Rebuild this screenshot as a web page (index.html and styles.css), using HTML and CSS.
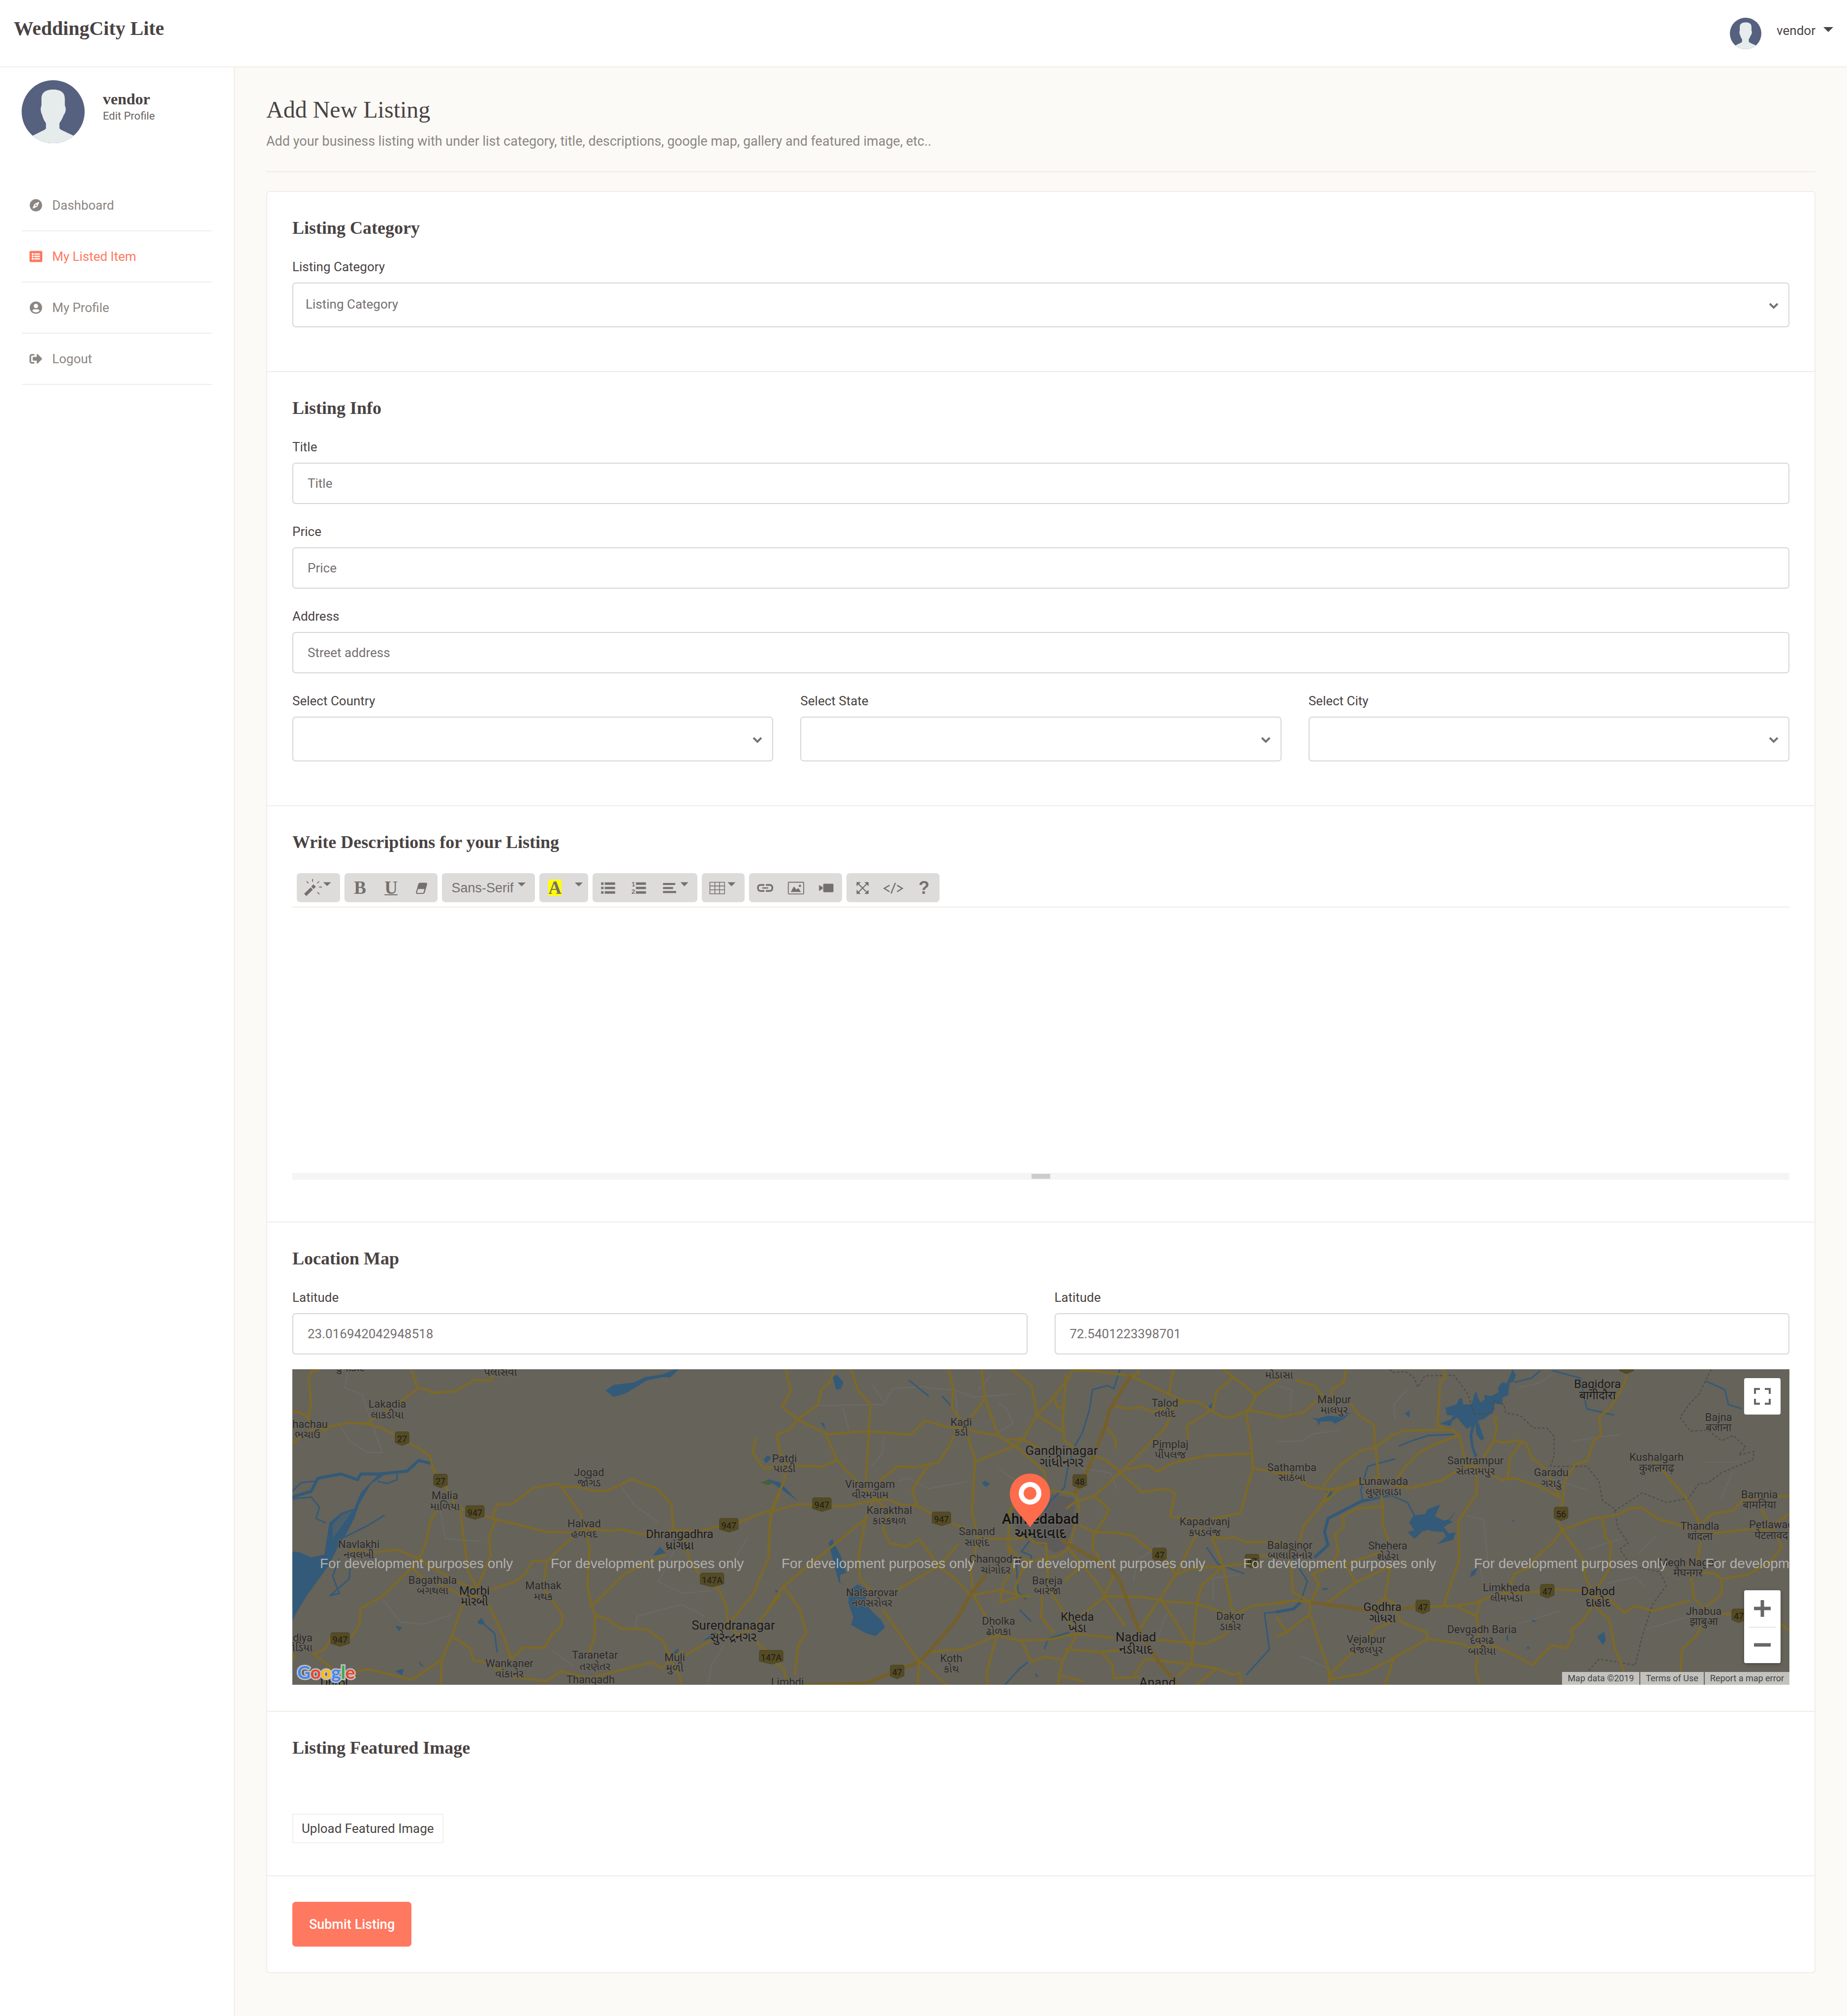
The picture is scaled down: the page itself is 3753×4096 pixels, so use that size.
FILE: index.html
```html
<!DOCTYPE html>
<html lang="en">
<head>
<meta charset="utf-8">
<title>Add New Listing - WeddingCity Lite</title>
<link rel="stylesheet" href="styles.css">
</head>
<body>
<svg class="defs" aria-hidden="true">
  <symbol id="avatar" viewBox="0 0 210 210">
    <rect width="210" height="210" fill="#56607f"/>
    <path fill="#e6ecec" d="M66 62C66 42 78 31 105 31s39 11 39 31v23c4 5 4 19-1 27l-3 4c-4 12-9 20-14 27v17c2 4 6 6 46 24l8 26H30l8-26c38-18 42-20 43-24v-17c-6-7-10-17-13-28-5-9-6-23-2-30z"/>
  </symbol>
  <symbol id="chevron" viewBox="0 0 20 14"><path d="M2 2l8 8 8-8" fill="none" stroke="#757273" stroke-width="4"/></symbol>
  <symbol id="caret" viewBox="0 0 18 9"><path d="M0 0h18l-9 9z" fill="currentColor"/></symbol>
  <symbol id="shield2" viewBox="0 0 30 30"><path d="M3 1h24l2 3v19l-14 6-14-6V4z" fill="#554b24" stroke="#47401f" stroke-width="1"/></symbol>
  <symbol id="shield3" viewBox="0 0 40 30"><path d="M3 1h34l2 3v19l-19 6-19-6V4z" fill="#554b24" stroke="#47401f" stroke-width="1"/></symbol>
  <symbol id="shield4" viewBox="0 0 50 30"><path d="M3 1h44l2 3v19l-24 6-24-6V4z" fill="#554b24" stroke="#47401f" stroke-width="1"/></symbol>
</svg>

<header class="topbar">
  <a class="brand" href="#">WeddingCity Lite</a>
  <button class="account" type="button">
    <svg class="account-avatar"><use href="#avatar"/></svg>
    <span>vendor</span>
    <svg class="account-caret"><use href="#caret"/></svg>
  </button>
</header>

<div class="shell">
  <aside class="sidebar">
    <div class="profile">
      <svg class="profile-avatar"><use href="#avatar"/></svg>
      <div class="profile-text">
        <strong class="profile-name">vendor</strong>
        <a class="profile-edit" href="#">Edit Profile</a>
      </div>
    </div>
    <nav class="menu">
      <a class="menu-item" href="#"><svg class="menu-icon" viewBox="0 0 496 512"><path d="M225.38 233.37c-12.5 12.5-12.5 32.76 0 45.25 12.49 12.5 32.76 12.5 45.25 0 12.5-12.5 12.5-32.76 0-45.25-12.5-12.49-32.76-12.49-45.25 0zM248 8C111.03 8 0 119.03 0 256s111.03 248 248 248 248-111.03 248-248S384.97 8 248 8zm126.14 148.05L308.17 300.4a31.938 31.938 0 0 1-15.77 15.77l-144.34 65.97c-16.65 7.61-33.81-9.55-26.2-26.2l65.98-144.35a31.938 31.938 0 0 1 15.77-15.77l144.34-65.97c16.65-7.6 33.8 9.55 26.19 26.2z"/></svg>Dashboard</a>
      <a class="menu-item active" href="#"><svg class="menu-icon" viewBox="0 0 512 512"><path d="M464 480H48c-26.51 0-48-21.49-48-48V80c0-26.51 21.49-48 48-48h416c26.51 0 48 21.49 48 48v352c0 26.51-21.49 48-48 48zM128 120c-22.091 0-40 17.909-40 40s17.909 40 40 40 40-17.909 40-40-17.909-40-40-40zm0 96c-22.091 0-40 17.909-40 40s17.909 40 40 40 40-17.909 40-40-17.909-40-40-40zm0 96c-22.091 0-40 17.909-40 40s17.909 40 40 40 40-17.909 40-40-17.909-40-40-40zm288-136v-32c0-6.627-5.373-12-12-12H204c-6.627 0-12 5.373-12 12v32c0 6.627 5.373 12 12 12h200c6.627 0 12-5.373 12-12zm0 96v-32c0-6.627-5.373-12-12-12H204c-6.627 0-12 5.373-12 12v32c0 6.627 5.373 12 12 12h200c6.627 0 12-5.373 12-12zm0 96v-32c0-6.627-5.373-12-12-12H204c-6.627 0-12 5.373-12 12v32c0 6.627 5.373 12 12 12h200c6.627 0 12-5.373 12-12z"/></svg>My Listed Item</a>
      <a class="menu-item" href="#"><svg class="menu-icon" viewBox="0 0 496 512"><path d="M248 8C111 8 0 119 0 256s111 248 248 248 248-111 248-248S385 8 248 8zm0 96c48.6 0 88 39.4 88 88s-39.4 88-88 88-88-39.4-88-88 39.4-88 88-88zm0 344c-58.7 0-111.3-26.6-146.5-68.2 18.8-35.4 55.6-59.8 98.5-59.8 2.4 0 4.8.4 7.1 1.1 13 4.2 26.6 6.9 40.9 6.9 14.3 0 28-2.7 40.9-6.9 2.3-.7 4.7-1.1 7.1-1.1 42.9 0 79.7 24.4 98.5 59.8C359.3 421.4 306.7 448 248 448z"/></svg>My Profile</a>
      <a class="menu-item" href="#"><svg class="menu-icon" viewBox="0 0 512 512"><path d="M497 273L329 441c-15 15-41 4.5-41-17v-96H152c-13.3 0-24-10.7-24-24v-96c0-13.3 10.7-24 24-24h136V88c0-21.4 25.9-32 41-17l168 168c9.3 9.4 9.3 24.6 0 34zM192 436v-40c0-6.6-5.4-12-12-12H96c-17.7 0-32-14.3-32-32V160c0-17.7 14.3-32 32-32h84c6.6 0 12-5.4 12-12V76c0-6.6-5.4-12-12-12H96c-53 0-96 43-96 96v192c0 53 43 96 96 96h84c6.6 0 12-5.4 12-12z"/></svg>Logout</a>
    </nav>
  </aside>

  <main class="main">
    <div class="page-head">
      <h1 class="page-title">Add New Listing</h1>
      <p class="page-sub">Add your business listing with under list category, title, descriptions, google map, gallery and featured image, etc..</p>
    </div>

    <form class="card">
      <section class="section">
        <h2 class="section-title">Listing Category</h2>
        <div class="fields">
          <div class="field">
            <label for="category">Listing Category</label>
            <div class="select"><select id="category"><option>Listing Category</option></select><svg><use href="#chevron"/></svg></div>
          </div>
        </div>
      </section>

      <section class="section">
        <h2 class="section-title">Listing Info</h2>
        <div class="fields">
          <div class="field"><label for="title">Title</label><input class="input" id="title" type="text" placeholder="Title"></div>
          <div class="field"><label for="price">Price</label><input class="input" id="price" type="text" placeholder="Price"></div>
          <div class="field"><label for="address">Address</label><input class="input" id="address" type="text" placeholder="Street address"></div>
          <div class="row">
            <div class="field"><label for="country">Select Country</label><div class="select"><select id="country"><option></option></select><svg><use href="#chevron"/></svg></div></div>
            <div class="field"><label for="state">Select State</label><div class="select"><select id="state"><option></option></select><svg><use href="#chevron"/></svg></div></div>
            <div class="field"><label for="city">Select City</label><div class="select"><select id="city"><option></option></select><svg><use href="#chevron"/></svg></div></div>
          </div>
        </div>
      </section>

      <section class="section">
        <h2 class="section-title">Write Descriptions for your Listing</h2>
        <div class="editor">
          <div class="toolbar">
            <div class="tools">
              <button type="button" class="tool tool-wide" aria-label="Style"><svg viewBox="54 48 288 192"><path d="M103 185l43-43 15 15-43 43zM150 137l15-15 16 16-15 15z"/><path d="M230 108h52l-26 25z"/><path d="M159 86v19M119 102l13 13M203 102l-13 13M202 140h19M191 174l14 14" class="line" stroke-width="6"/></svg></button>
            </div>
            <div class="tools">
              <button type="button" class="tool glyph">B</button>
              <button type="button" class="tool glyph underline">U</button>
              <button type="button" class="tool" aria-label="Remove font style"><svg viewBox="784 48 206 192"><path d="M875 111h36q12 0 10 11l-16 55q-3 9-13 9h-35q-12 0-10-11l15-54q3-10 13-10zm-14 42l-7 22q-1 4 4 4h33q5 0 6-4l6-22z" fill-rule="evenodd"/></svg></button>
            </div>
            <div class="tools">
              <button type="button" class="tool font-pick">Sans-Serif<svg class="tool-caret"><use href="#caret"/></svg></button>
            </div>
            <div class="tools tools-color">
              <button type="button" class="tool glyph"><span class="mark">A</span></button>
              <button type="button" class="tool color-more" aria-label="More color"><svg class="tool-caret"><use href="#caret"/></svg></button>
            </div>
            <div class="tools">
              <button type="button" class="tool" aria-label="Unordered list"><svg viewBox="492 48 206 192"><path d="M549 109h16v16h-16zM549 138h16v16h-16zM549 168h16v16h-16zM573 109h69v16h-69zM573 138h69v16h-69zM573 168h69v16h-69z"/></svg></button>
              <button type="button" class="tool" aria-label="Ordered list"><svg viewBox="698 48 206 192"><path d="M780 109h67v16h-67zM780 138h67v16h-67zM780 168h67v16h-67z"/><text x="751" y="137" class="ol-num">1</text><text x="751" y="184" class="ol-num">2</text></svg></button>
              <button type="button" class="tool tool-mid" aria-label="Paragraph"><svg viewBox="904 48 284 192"><path d="M960 113h81v13h-81zM960 140h67v13h-67zM960 166h87v14h-87zM1076 108h52l-26 27z"/></svg></button>
            </div>
            <div class="tools">
              <button type="button" class="tool tool-mid" aria-label="Table"><svg viewBox="1218 48 282 192"><path d="M1271 108h97v77h-97zM1271 133h97M1271 158h97M1304 108v77M1335 108v77" class="line" stroke-width="5"/><path d="M1388 108h52l-26 27z"/></svg></button>
            </div>
            <div class="tools">
              <button type="button" class="tool" aria-label="Link"><svg viewBox="60 48 206 192"><path d="M162 126h-25q-18 0-18 20t18 20h25M172 126h25q18 0 18 20t-18 20h-25" class="line" stroke-width="11"/><path d="M151 146h32" class="line" stroke-width="9" stroke-linecap="round"/></svg></button>
              <button type="button" class="tool" aria-label="Picture"><svg viewBox="266 48 206 192"><rect x="321" y="108" width="102" height="78" rx="4" class="line" stroke-width="6"/><path d="M337 173l19-33q3-3 6 0l13 17 9-8q3-2 6 1l15 23z"/><circle cx="398" cy="132" r="8"/></svg></button>
              <button type="button" class="tool" aria-label="Video"><svg viewBox="472 48 206 192"><rect x="553" y="118" width="68" height="56" rx="6"/><path d="M525 127l24 13v12l-24 14z"/></svg></button>
            </div>
            <div class="tools">
              <button type="button" class="tool" aria-label="Full screen"><svg viewBox="708 48 206 192"><path d="M775 107h28l-28 28zM855 107v28l-28-28zM775 186v-28l28 28zM855 186h-28l28-28z"/><path d="M783 115l64 63M847 115l-64 63" class="line" stroke-width="7"/></svg></button>
              <button type="button" class="tool" aria-label="Code view"><svg viewBox="914 48 206 192"><path d="M994 128l-35 21 35 22M1044 128l35 21-35 22M1033 112l-29 71" class="line" stroke-width="8"/></svg></button>
              <button type="button" class="tool help">?</button>
            </div>
          </div>
          <textarea class="editor-area" aria-label="Description"></textarea>
          <div class="editor-bar"><span class="editor-grip"></span></div>
        </div>
      </section>

      <section class="section">
        <h2 class="section-title">Location Map</h2>
        <div class="row row-map">
          <div class="field"><label for="lat">Latitude</label><input class="input" id="lat" type="text" value="23.016942042948518"></div>
          <div class="field"><label for="lng">Latitude</label><input class="input" id="lng" type="text" value="72.5401223398701"></div>
        </div>
        <div class="map">
          <svg class="map-canvas">
            <g transform="translate(-62.5 -234.3) scale(.672 .5844)">
              <path class="minor" d="M262 401L252 465 305 490 325 560 365 690 320 690 265 650 240 600M540 890L555 990 665 1000M1085 805L1125 870 1200 935M365 1200L420 1280 490 1287 570 1255M1270 980L1200 1140 1275 1180 1360 1170M1130 1300L1135 1260 1270 1218 1340 1260M1470 985L1430 1060M1400 1360L1360 1430 1350 1498M880 1380L940 1430"/>
              <path class="water" d="M1040 475L1065 455 1125 447 1160 428 1215 418 1245 403 1262 401 1235 430 1215 428 1165 440 1100 485 1065 497ZM355 765L300 830 280 885 240 900 205 935 190 1045 150 1055 115 1037 93 1035V1278L104 1250 135 1190 205 1080 230 1020 255 975 280 920 295 870 330 800 375 765ZM1183 1050L1205 1018 1222 1040ZM653 1280L665 1265 675 1283 660 1290ZM405 1293L425 1297 415 1312ZM1245 1385L1258 1372 1268 1390 1250 1397ZM1335 1345L1370 1315 1390 1325ZM1518 715L1530 700 1540 712 1525 727ZM405 1450L430 1442 425 1465ZM475 1415L493 1437 480 1430Z"/>
              <path class="island" d="M215 990L215 940 245 905 275 893 240 950Z"/>
              <path class="river" d="M520 730L475 718 440 755 355 765 300 765 290 785 240 765 170 780 150 825 93 845"/>
              <path class="stream" d="M93 852L150 845 175 880 165 920 195 935M250 985L320 945 372 908M235 1060L215 1120 235 1180 205 1188M270 1060L265 1130 210 1185M93 825L120 795 165 790M350 790L380 798 410 785 410 765M665 1280L705 1320 712 1385"/>
              <path class="green" d="M1510 795L1530 785 1552 795 1530 804Z"/>
              <path class="road" d="M175 403L150 410 143 430 149 515 142 572M93 548L112 549 142 570 150 610 115 640 93 660M150 610L195 612 205 600 265 587 315 590 360 603 405 630M315 590L360 560 420 515 472 467 453 401M472 467L500 470 515 483 585 478 645 437 690 442 700 425 712 401M445 655L508 700 520 750 560 815 585 870 600 885 675 910 700 920 865 967 940 968 990 955 1055 964 1083 957 1145 973 1200 975 1245 960M1245 960L1240 872 1195 815 1120 783 1048 822 1010 825 960 810 905 808 895 798 820 815 757 870 712 870 698 920 708 930 688 980 693 1050 652 1160M600 890L625 1105 652 1160M905 808L965 905 978 955M1245 960L1270 960 1320 965 1370 950 1400 945M1440 935L1515 900 1568 887M1270 960L1295 1065 1320 1110 1360 1120 1405 1220 1410 1290M1220 1045L1100 1110 998 1225 985 1155 992 1020 978 960M940 985L905 1020 863 1068 820 1067 795 1115 765 1140 690 1168M863 1068L852 1160 910 1255 905 1295 880 1320 855 1368 790 1368 755 1410M998 1225L1008 1255 1007 1330 990 1390M1008 1255L1050 1272 1085 1302 1165 1305 1215 1345 1240 1420 1265 1470 1270 1498M1280 1395L1350 1350 1410 1290 1485 1185 1535 1050 1535 950 1545 890 1568 830M1440 1330L1490 1340 1520 1375 1568 1400M1410 1290L1440 1325 1490 1300 1568 1185M1495 640L1485 690 1520 748 1568 735M1568 622L1558 630 1568 690M535 885L510 930 500 990 485 1040 475 1060 410 1028 340 1038 265 1030M475 1060L510 1085 590 1140 650 1165M475 1060L455 1090 415 1135 365 1190 300 1232 295 1290 270 1335M455 1090L480 1120 560 1160 600 1185 650 1190 690 1225 735 1340 755 1410M210 1335L190 1375 155 1390 185 1415 240 1465 320 1443 455 1480 545 1410 575 1330 605 1225 640 1190M575 1330L630 1370 640 1412 690 1425 755 1470 860 1485 905 1450 990 1475 1180 1420 1210 1440 1270 1380M545 1410L542 1498M93 1415L100 1390"/>
            </g>
            <g transform="translate(963.9 -14.7) scale(.672 .4324)">
              <path class="city" d="M750 640L860 620 930 640 930 760 900 880 870 895 830 860 780 830 750 760Z"/>
              <path class="minor" d="M150 205L355 200 380 125 470 115 500 125 565 130 625 165 750 150M320 110L355 190M230 210L250 330M355 350L350 430 310 500M570 150L580 270M700 190L725 220 745 290 700 330M400 560L425 545 490 595 610 560M680 60L640 130M1430 1000L1350 1015 1350 1120M1110 1030L1120 930 1190 860M1210 1180L1180 1300M640 880L680 950M700 500L790 600M950 500L1040 520 1060 600"/>
              <path class="water" d="M200 70L212 60 232 95 225 125 210 130ZM250 1070L275 1045 300 1065 300 1140 330 1190 345 1210 358 1247 330 1287 300 1275 255 1235 262 1200 247 1130ZM187 850L198 832 225 915 240 990 222 1000 222 1040 250 1055 240 1050 218 1035ZM650 568L660 558 675 572 663 588ZM0 440L12 445 0 475ZM0 550L40 565 95 655 55 610ZM162 285L172 285 178 318ZM1332 215L1348 190 1345 220ZM25 1070L35 1075 28 1085Z"/>
              <path class="stream" d="M1068 34L1050 125 1030 110 985 130 975 230 955 330 930 400 910 500 900 590 860 650 840 700M795 840L770 890 800 910 800 940M755 950L760 1080 785 1115M765 1165L800 1220M915 1270L850 1300 840 1350M790 1410L765 1440 720 1517M1568 1170L1505 1180 1520 1350 1450 1470M430 85L490 160M530 160L560 210M820 1480L812 1465M1330 870L1365 950 1445 995"/>
              <path class="road" d="M58 34L73 135 47 210 93 270M205 34L190 95 165 130 155 200 93 270 68 320 32 338 37 410 60 485 52 560 13 700 5 900M93 270L178 335M255 34L275 130 313 200 300 560M178 340L308 325 435 342 478 275 545 305 600 310M178 340L213 460 237 505 325 640M0 495L60 485 168 492 213 460M0 705L100 668 237 678 325 650 370 645 400 670 455 675 500 715M555 755L600 780 645 830 730 832 790 825 815 850 845 852 850 1000 845 1050M325 640L300 730 278 910 282 1020 320 1080M325 640L370 700 352 785 372 852 420 867 463 833 520 960M300 735L50 1055 0 1170M50 1055L100 1160 120 1275 95 1330 85 1470M340 560L395 490 445 495 520 470 550 400 575 320 600 300 660 170 650 34M455 675L440 600 490 480M550 34L565 130 560 210 600 310 630 460 625 600 620 700 638 820M638 835L617 985 625 1090 615 1095M600 310L640 330 700 345 765 410 840 515 845 600 870 605 935 622 945 690 915 870 885 910 810 935 760 920 730 860 735 700 755 640M660 170L700 345M740 34L800 110 810 180 817 250 900 330M910 80L860 180 817 250 775 360 755 390 632 468M905 60L895 280 900 370 945 420M910 80L925 40 980 40 1100 65 1123 55 1123 34M1100 65L1215 150 1265 185 1300 185 1380 260 1410 258 1455 225 1568 260M1230 34L1215 160M1050 205L1095 220 1130 210 1165 235 1265 185M1240 180L1205 310 1080 505 990 630 930 660 905 690M1025 300L1055 360 1055 410M870 170L880 215 897 215M725 365L775 362 830 410M990 440L1030 465 1070 520 1135 612 1205 595 1235 615 1220 725 1240 730 1325 745 1432 710 1470 500 1465 380 1450 250 1480 155 1410 70 1380 34M1480 155L1568 60M1410 70L1360 140 1350 220 1270 300 1275 360M1085 505L1155 485 1182 515 1225 475 1330 440 1468 430M1470 500L1568 525M1315 775L1285 850 1237 1000 1125 1260M1345 815L1380 960 1410 1180M1350 820L1380 830 1412 822 1445 845 1568 848M945 765L990 800 1045 800 1105 815 1165 890M990 800L985 880 1005 915 1000 930M990 630L1035 690 1020 740 992 800M1205 930L1237 1000 1280 970 1380 960 1450 945M1490 910L1568 915M1380 960L1315 1050 1300 1140 1283 1420 1240 1480M900 1030L945 965M915 880L990 1020 1025 1100 1140 1105 1210 1125 1300 1135 1410 1190 1470 1145 1568 1130M1025 1100L930 1215M860 1080L920 1230 945 1280 1050 1295M940 1275L895 1400 880 1517M940 1275L870 1300 840 1305 770 1310 695 1285 595 1350 490 1362M870 1275L830 1200 833 1090 850 1040M695 1285L665 1460 668 1517M695 1285L625 1095 705 1070 770 1100 800 1100M705 1130L760 1105 750 1060 775 970 800 935M705 1130L715 1040 735 1000M1410 1190L1390 1280 1325 1325 1180 1305M900 1350L1010 1362 1090 1350M1010 1362L1045 1420 1050 1485 1130 1480M770 1310L800 1410 840 1385 890 1400M880 1470L960 1500M1145 1395L1283 1420 1360 1440 1410 1470 1430 1460 1435 1517M1360 1440L1300 1517M730 860L750 1000M1050 1000L1020 1100 1085 1240M1190 1110L1240 1230 1283 1340M1145 1395L1110 1470M0 1380L50 1440 60 1490"/>
              <path class="highway" d="M1100 65L1035 230 1025 300 990 430 965 530 930 620M890 835L1040 970 1065 1020 1125 1260 1190 1420 1245 1517M663 1000L615 1095 575 1210 490 1362 465 1405 300 1510 100 1517"/>
              <path class="road" d="M465 1405L545 1517M350 1160L385 1240 460 1405 457 1517M395 1070L520 960 580 855M520 960L570 1020 615 1095"/>
            </g>
            <g transform="translate(1999.3 -14.7) scale(.7013 .4324)">
              <path class="minor" d="M0 110L45 130 40 230M380 130L340 200 345 270M700 120L760 100 800 60M860 370L1000 340M0 375L80 370 100 340 180 320M550 720L600 740 615 960M780 540L900 600M1320 520L1290 640M1240 470L1340 470M960 1040L1040 1010 1070 1060M1060 1260L1210 1190M70 1380L150 1440M700 1230L820 1170M590 960L600 1040M900 880L1000 830M1100 820L1050 900"/>
              <path class="water" d="M487 192L492 215 510 205 522 200 530 172 538 170 542 200 566 198 572 165 578 135 584 165 592 190 605 175 602 155 622 160 645 142 642 120 655 95 668 100 685 34 694 60 688 92 676 98 672 155 655 168 655 200 632 195 632 225 620 245 600 270 584 275 602 360 594 370 580 340 576 290 568 345 572 400 582 440 576 450 565 400 560 345 565 300 552 315 525 262 505 280 512 250 495 250ZM474 290L512 265 505 300ZM398 720L430 715 440 690 475 670 460 725 485 745 500 740 522 697 502 745 512 750 485 775 500 805 520 800 512 835 465 857 492 820 485 798 450 795 440 788 425 795 400 830 380 798 400 790 385 755ZM103 262L120 265 150 252 190 258 218 235 195 268 170 290 160 278 128 280 123 298 118 275Z"/>
              <path class="water" d="M372 240L388 228 385 262ZM145 605L163 608 158 635 143 635ZM930 1290L950 1268 955 1310 945 1328ZM565 985L585 965 575 1000 562 1010ZM665 1300L672 1275 672 1315ZM683 740L690 745 686 755ZM738 1210L752 1215 748 1225ZM723 1345L730 1335 736 1347ZM133 1064L150 1062 148 1070 133 1072Z"/>
              <path class="stream" d="M515 340L440 345 385 375 355 395M345 455L265 490 245 600 250 650M400 720L380 660 330 625M40 900L90 1030 70 1130M690 95L740 75 765 40M800 40L880 75 900 220 980 250M1245 90L1300 130 1310 200 1350 220"/>
              <path class="river" d="M330 625L245 655 150 735 140 800 150 860 110 920M70 1130L50 1160 0 1175"/>
              <path class="border" d="M330 34L335 50 375 45 400 75 410 118 430 65 515 62 555 150 575 245 625 240 630 180 660 200 665 240 705 250 745 310 785 310 805 350 805 440 795 490 900 490 935 560 945 650 980 690 990 780 1020 850 995 880 1030 960 1110 985 1130 1050 1090 1140 1060 1290 1040 1425 935 1395 900 1460M1260 34L1225 150 1195 200 1170 260 1200 325 1250 320 1290 370 1325 345 1360 400 1340 437 1385 420 1380 460 1290 520 1250 570 1225 570 1195 640 1130 660 1060 615 980 700"/>
              <path class="road" d="M203 34L195 95 160 130 165 200M55 85L110 110 138 165 115 185 80 235 5 262M215 195L240 250 283 295 288 400 298 560 310 690 307 760 325 840M480 34L492 70 475 90 467 300 515 325 530 345 550 480M0 520L40 520 95 585 155 600 215 580 300 540M135 590L145 560 185 485 240 420 288 400 330 350 370 322 515 318M530 345L460 385 410 430 375 490 335 580 390 592 480 555 545 490 580 490M240 555L180 600 125 680 80 770 65 860 40 890 48 1080 100 1130M155 600L140 640 125 680M310 685L285 680 230 690 190 730 198 770 170 810 180 890 160 960 105 995 125 1045 100 1130M580 490L655 555 690 545 770 590 825 640M580 490L580 620 527 750 530 930 490 1120 485 1145M600 450L630 370 640 300 632 280 640 250M630 370L660 378 700 368 725 385 740 450 780 500 820 630M710 375L677 450 670 548M1015 60L1010 100 970 210 935 260 942 340 920 370 900 465 865 480 835 560 830 660 822 690M815 745L828 790 890 930 895 1010 925 1100M828 790L800 850 745 930 740 960 690 995 675 1060 660 1085M828 790L920 735 985 720 1020 690 1055 682 1110 740 1220 790M945 735L955 830 970 850 965 970 935 1050 925 1100M1095 465L1135 540 1185 630 1220 735 1230 800 1280 803 1370 785 1430 790M1225 770L1260 715 1325 697 1350 650 1400 635 1487 630M1235 800L1220 930 1190 960M1405 690L1425 750 1440 780 1465 870 1430 940 1365 1000 1290 1020 1270 992 1200 985 1210 1110 1260 1180 1320 1185M1290 1020L1290 1090 1245 1150M1440 760L1487 715M0 1130L60 1120 100 1130M445 1150L520 1145 580 1130 640 1090 765 1078M805 1068L880 1075 925 1105 960 1110 1010 1178 1040 1145 1090 1170 1200 1120M315 1110L265 1168M315 1110L365 1155M145 1135L230 1035 330 960 315 1110M230 1035L200 950 310 890M335 1220L290 1250 250 1320 160 1460 150 1517M350 1180L360 1220 435 1270 440 1300 540 1325 565 1345 620 1325 700 1385 740 1425 800 1330 840 1345 860 1290 855 1260 890 1210 915 1150M440 1300L390 1345 330 1400 250 1465 155 1490M340 1395L315 1517M525 1150L580 1195 590 1300 578 1450 590 1510M590 1130L580 1190M925 1150L965 1210 980 1340 1005 1440 1005 1517M100 1190L120 1300 150 1430 155 1490M100 1130L95 1190 60 1230 30 1270 0 1290M0 1200L30 1270M1245 1210L1215 1290 1175 1350 1170 1517M1460 1230L1487 1260"/>
              <path class="highway" d="M100 1130L145 1138 265 1168 365 1160 405 1150"/>
            </g>

            <g>
              <use href="#shield2" x="208" y="126" width="30" height="30"/><use href="#shield2" x="286" y="212" width="30" height="30"/>
              <use href="#shield3" x="351" y="276" width="40" height="30"/><use href="#shield3" x="867" y="302" width="40" height="30"/>
              <use href="#shield3" x="77" y="534" width="40" height="30"/><use href="#shield4" x="828" y="413" width="50" height="30"/>
              <use href="#shield4" x="948" y="570" width="50" height="30"/><use href="#shield3" x="1056" y="260" width="40" height="30"/>
              <use href="#shield3" x="1299" y="289" width="40" height="30"/><use href="#shield2" x="1585" y="213" width="30" height="30"/>
              <use href="#shield2" x="1747" y="362" width="30" height="30"/><use href="#shield2" x="1935" y="375" width="30" height="30"/>
              <use href="#shield2" x="1214" y="600" width="30" height="30"/><use href="#shield2" x="2563" y="279" width="30" height="30"/>
              <use href="#shield2" x="2535" y="436" width="30" height="30"/><use href="#shield2" x="2282" y="468" width="30" height="30"/>
              <use href="#shield2" x="2924" y="486" width="30" height="30"/><use href="#shield2" x="2696" y="-20" width="30" height="30"/>
            </g>
            <g class="shield-text">
              <text x="223" y="148">27</text><text x="301" y="234">27</text><text x="371" y="298">947</text><text x="887" y="324">947</text><text x="97" y="556">947</text><text x="853" y="435">147A</text><text x="973" y="592">147A</text><text x="1076" y="282">947</text><text x="1319" y="311">947</text><text x="1600" y="235">48</text><text x="1762" y="384">47</text><text x="1950" y="397">47</text><text x="1229" y="622">47</text><text x="2578" y="301">56</text><text x="2550" y="458">47</text><text x="2297" y="490">47</text><text x="2939" y="508">47</text>
            </g>
            <g class="town">
              <text x="118" y="4">કુવાકાટ</text><text x="423" y="13">પલાસવા</text>
              <text x="193" y="78">Lakadia</text><text x="193" y="100">લાકડીયા</text>
              <text x="72" y="119" class="to-end">Bhachau</text><text x="31" y="140">ભચાઉ</text>
              <text x="310" y="264">Malia</text><text x="310" y="286">માળિયા</text>
              <text x="603" y="217">Jogad</text><text x="603" y="238">જોગડ</text>
              <text x="593" y="321">Halvad</text><text x="593" y="342">હળવદ</text>
              <text x="135" y="363">Navlakhi</text><text x="135" y="384">નવલખી</text>
              <text x="285" y="436">Bagathala</text><text x="285" y="457">બગથલા</text>
              <text x="510" y="447">Mathak</text><text x="510" y="469">મથક</text>
              <text x="41" y="553" class="to-end">Jodiya</text><text x="41" y="573" class="to-end">જોડિયા</text>
              <text x="615" y="588">Taranetar</text><text x="615" y="611">તરણેતર</text>
              <text x="777" y="593">Muli</text><text x="777" y="614">મુળી</text>
              <text x="441" y="605">Wankaner</text><text x="441" y="626">વાંકાનેર</text>
              <text x="606" y="638">Thangadh</text>
              <text x="1359" y="115">Kadi</text><text x="1359" y="135">કડી</text>
              <text x="1000" y="189">Patdi</text><text x="1000" y="209">પાટડી</text>
              <text x="1773" y="76">Talod</text><text x="1773" y="97">તલોદ</text>
              <text x="1784" y="160">Pimplaj</text><text x="1784" y="181">પીંપલજ</text>
              <text x="1174" y="241">Viramgam</text><text x="1174" y="262">વીરમગામ</text>
              <text x="1213" y="294">Karakthal</text><text x="1213" y="315">કારકથળ</text>
              <text x="1391" y="337">Sanand</text><text x="1391" y="359">સાણંદ</text>
              <text x="1429" y="393">Changodar</text><text x="1429" y="415">ચાંગોદર</text>
              <text x="1854" y="317">Kapadvanj</text><text x="1854" y="339">કપડવંજ</text>
              <text x="2027" y="365">Balasinor</text><text x="2027" y="385">બાલાસિનોર</text>
              <text x="2031" y="207">Sathamba</text><text x="2031" y="227">સાઠંબા</text>
              <text x="1534" y="437">Bareja</text><text x="1534" y="457">બારેજા</text>
              <text x="1178" y="461">Nalsarovar</text><text x="1178" y="482">નળસરોવર</text>
              <text x="1435" y="519">Dholka</text><text x="1435" y="540">ઢોળકા</text>
              <text x="1906" y="509">Dakor</text><text x="1906" y="530">ડાકોર</text>
              <text x="1339" y="595">Koth</text><text x="1339" y="616">કોથ</text>
              <text x="1006" y="643">Limbdi</text><text x="2005" y="19">મોડાસા</text>
              <text x="2117" y="69">Malpur</text><text x="2117" y="90">માલપુર</text>
              <text x="2898" y="105">Bajna</text><text x="2898" y="126">बजाना</text>
              <text x="2772" y="186">Kushalgarh</text><text x="2772" y="208">कुशलगढ़</text>
              <text x="2404" y="193">Santrampur</text><text x="2404" y="214">સંતરામપુર</text>
              <text x="2558" y="217">Garadu</text><text x="2558" y="239">ગરાડુ</text>
              <text x="2217" y="235">Lunawada</text><text x="2217" y="256">લુણાવાડા</text>
              <text x="2981" y="262">Bamnia</text><text x="2981" y="283">बामनिया</text>
              <text x="2860" y="326">Thandla</text><text x="2860" y="347">थांदला</text>
              <text x="2960" y="323" class="to-start">Petlawad</text><text x="2971" y="345" class="to-start">पेटलावद</text>
              <text x="2226" y="366">Shehera</text><text x="2226" y="388">શેહેરા</text>
              <text x="2836" y="400">Megh Nagar</text><text x="2836" y="421">मेघनगर</text>
              <text x="2467" y="451">Limkheda</text><text x="2467" y="472">લીમખેડા</text>
              <text x="2868" y="499">Jhabua</text><text x="2868" y="520">झाबुआ</text>
              <text x="2417" y="536">Devgadh Baria</text><text x="2417" y="558">દેવગઢ</text><text x="2417" y="580">બારીયા</text>
              <text x="2182" y="556">Vejalpur</text><text x="2182" y="577">વેજલપુર</text>
            </g>
            <g class="town town-md">
              <text x="787" y="343">Dhrangadhra</text><text x="787" y="366">ધ્રાંગધ્રા</text>
              <text x="370" y="458">Morbi</text><text x="370" y="480">મોરબી</text>
              <text x="85" y="645">Dhrol</text>
              <text x="1595" y="511">Kheda</text><text x="1595" y="534">ખેડા</text>
              <text x="2652" y="38">Bagidora</text><text x="2652" y="61">बागीदौरा</text>
              <text x="2653" y="459">Dahod</text><text x="2653" y="482">દાહોદ</text>
              <text x="2215" y="491">Godhra</text><text x="2215" y="514">ગોધરા</text>
            </g>
            <g class="town town-lg">
              <text x="896" y="529">Surendranagar</text><text x="896" y="553">સુરેન્દ્રનગર</text>
              <text x="1563" y="174">Gandhinagar</text><text x="1563" y="198">ગાંધીનગર</text>
              <text x="1714" y="553">Nadiad</text><text x="1714" y="578">નડીયાદ</text>
              <text x="1758" y="645">Anand</text>
            </g>
            <g class="town town-xl"><text x="1520" y="314">Ahmedabad</text><text x="1520" y="343">અમદાવાદ</text></g>
            <g class="devtext">
              <text x="56" y="404">For development purposes only</text><text x="525" y="404">For development purposes only</text><text x="994" y="404">For development purposes only</text><text x="1463" y="404">For development purposes only</text><text x="1932" y="404">For development purposes only</text><text x="2401" y="404">For development purposes only</text><text x="2871" y="404">For development purposes only</text>
            </g>
            <path fill="#ff6c4c" d="M1499 212C1476 212 1458 230 1458 253C1458 280 1482 297 1499 321C1516 297 1540 280 1540 253C1540 230 1522 212 1499 212Z"/>
            <circle cx="1499" cy="252" r="18" fill="none" stroke="#fff" stroke-width="10"/>
            <text class="google" x="10" y="629"><tspan fill="#4285f4">G</tspan><tspan fill="#ea4335">o</tspan><tspan fill="#fbbc05">o</tspan><tspan fill="#4285f4">g</tspan><tspan fill="#34a853">l</tspan><tspan fill="#ea4335">e</tspan></text>
          </svg>
          <div class="map-controls">
            <button type="button" class="map-btn" aria-label="Toggle fullscreen"><svg viewBox="0 0 34 34"><path d="M2 12V2h10M22 2h10v10M32 22v10H22M12 32H2V22" fill="none" stroke="#666" stroke-width="4"/></svg></button>
            <div class="map-zoom">
              <button type="button" class="map-btn" aria-label="Zoom in"><svg viewBox="0 0 34 34"><path d="M0 17h34M17 0v34" stroke="#666" stroke-width="7"/></svg></button>
              <button type="button" class="map-btn" aria-label="Zoom out"><svg viewBox="0 0 34 34"><path d="M0 17h34" stroke="#666" stroke-width="7"/></svg></button>
            </div>
          </div>
          <div class="map-legal"><span>Map data ©2019</span><a href="#">Terms of Use</a><a href="#">Report a map error</a></div>
        </div>
      </section>

      <section class="section section-upload">
        <h2 class="section-title">Listing Featured Image</h2>
        <button type="button" class="upload">Upload Featured Image</button>
      </section>

      <div class="section section-submit">
        <button type="submit" class="submit">Submit Listing</button>
      </div>
    </form>
  </main>
</div>
</body>
</html>
```
FILE: styles.css
```css
:root {
  --ink: #494343;
  --muted: #8b8682;
  --line: #f2ede5;
  --field: #d9d5d7;
  --coral: #ff7860;
  --serif: "Liberation Serif", serif;
  --sans: Roboto, sans-serif;
}
* { box-sizing: border-box; }
body {
  margin: 0;
  background: #fff;
  color: var(--ink);
  font: 26px/32px var(--sans);
}
a { color: inherit; text-decoration: none; }
button, input, select, textarea { font: inherit; color: inherit; margin: 0; }
button { border: 0; padding: 0; background: none; cursor: pointer; }
h1, h2, p { margin: 0; }
svg { display: block; }
.defs { display: none; }

/* Header */
.topbar {
  display: flex;
  justify-content: space-between;
  align-items: flex-start;
  height: 137px;
  padding: 36px 28px 0;
  border-bottom: 2px solid var(--line);
}
.brand { font: bold 40px/44px var(--serif); }
.account { display: flex; align-items: flex-start; }
.account span { margin: 10px 16px 0 31px; }
.account-avatar { width: 64px; height: 64px; border-radius: 50%; }
.account-caret { width: 20px; height: 10px; margin-top: 19px; }

.shell { display: grid; grid-template-columns: 477px 1fr; }

/* Sidebar */
.sidebar { border-right: 2px solid var(--line); padding: 26px 44px 0; }
.profile { display: flex; gap: 37px; align-items: flex-start; margin-bottom: 75px; }
.profile-avatar { width: 128px; height: 128px; border-radius: 50%; }
.profile-text { display: flex; flex-direction: column; gap: 4px; padding-top: 20px; }
.profile-name { font: bold 32px/36px var(--serif); }
.profile-edit { font-size: 22px; line-height: 26px; color: #6a6564; }
.menu-item {
  display: flex;
  align-items: center;
  gap: 20px;
  height: 104px;
  padding-left: 16px;
  border-bottom: 2px solid var(--line);
  color: var(--muted);
}
.menu-item.active { color: var(--coral); }
.menu-icon { width: 26px; height: 26px; fill: currentColor; }

/* Page */
.main { background: #fbfaf6; padding: 58px 64px 87px; }
.page-head { border-bottom: 2px solid var(--line); padding-bottom: 45px; margin-bottom: 38px; }
.page-title { font: 48px/56px var(--serif); margin-bottom: 20px; }
.page-sub { font-size: 27px; color: var(--muted); }

.card { background: #fff; border: 2px solid var(--line); border-radius: 7px; }
.section { padding: 53px 51px; border-bottom: 2px solid var(--line); }
.section:last-child { border-bottom: 0; }
.section-title { font: bold 36px/40px var(--serif); margin-bottom: 43px; }

.fields { display: grid; gap: 40px; margin-bottom: 36px; }
.row { display: grid; grid-auto-flow: column; grid-auto-columns: 1fr; gap: 55px; }
.row-map { margin-bottom: 30px; }
.field { display: flex; flex-direction: column; gap: 16px; }
.input {
  width: 100%;
  height: 84px;
  padding: 0 29px;
  border: 2px solid var(--field);
  border-radius: 7px;
  background: #fff;
  color: #747070;
}
.input::placeholder { color: #747070; opacity: 1; }
.select { display: grid; align-items: center; }
.select > * { grid-area: 1 / 1; }
.select select {
  width: 100%;
  height: 91px;
  padding: 0 25px 3px;
  border: 2px solid var(--field);
  border-radius: 7px;
  background: #fff;
  color: #747070;
  appearance: none;
}
.select svg { justify-self: end; width: 20px; height: 14px; margin: 4px 22px 0 0; pointer-events: none; }

/* Editor */
.editor { margin-bottom: 32px; }
.toolbar { display: flex; flex-wrap: wrap; gap: 9px; padding: 0 9px 9px; border-bottom: 2px solid var(--line); }
.tools { display: flex; border-radius: 7px; background: #dddcda; color: #74706d; }
.tool { display: flex; align-items: center; justify-content: center; width: 63px; height: 59px; }
.tool > svg { width: 100%; height: 100%; fill: currentColor; }
.tool .line { fill: none; stroke: currentColor; }
.tool-wide { width: 88px; }
.tool-mid { width: 87px; }
.glyph { font: bold 37px/33px var(--serif); }
.underline { text-decoration: underline; text-decoration-thickness: 2px; }
.font-pick { width: 189px; gap: 8px; font: 27px/32px "Liberation Sans", sans-serif; }
.tool > .tool-caret { width: 16px; height: 8px; margin-bottom: 14px; }
.tools-color .glyph { width: 63px; }
.tools-color .color-more { width: 36px; justify-content: flex-start; padding-left: 9px; }
.mark { background: #ff0; }
.help { font: bold 36px/40px "Liberation Sans", sans-serif; }
.ol-num { font: bold 44px "Liberation Sans", sans-serif; }
.editor-area { display: block; width: 100%; height: 539px; border: 0; padding: 18px; resize: none; background: #fff; }
.editor-bar { display: flex; justify-content: center; height: 14px; background: #f5f5f5; }
.editor-grip { width: 38px; height: 10px; margin-top: 2px; background: #ccc; }

/* Map */
.map { position: relative; height: 641px; overflow: hidden; background: #66635b; }
.map-canvas { width: 100%; height: 100%; }
.map-canvas path { vector-effect: non-scaling-stroke; stroke-linejoin: round; }
.minor, .river, .stream, .border, .road, .highway { fill: none; }
.minor { stroke: #6b6b68; stroke-width: 2; }
.river { stroke: #335a78; stroke-width: 6; }
.stream { stroke: #335a78; stroke-width: 3; }
.border { stroke: #4c4a48; stroke-width: 2; stroke-dasharray: 5 4; }
.road { stroke: #7b6929; stroke-width: 5; }
.highway { stroke: #75602a; stroke-width: 7; }
.water { fill: #335a78; }
.island { fill: #66635b; opacity: .5; }
.green { fill: #486038; }
.city { fill: #5d5c5b; }
.shield-text { font: 18px var(--sans); fill: #1c1b18; text-anchor: middle; }
.town {
  font: 22px Roboto, "Noto Sans Gujarati", "Noto Sans Devanagari", "Noto Sans", sans-serif;
  fill: #2b2a28;
  stroke: #6b6861;
  stroke-width: 3;
  paint-order: stroke;
  text-anchor: middle;
}
.town-md { font-size: 24px; fill: #1b1a19; }
.town-lg { font-size: 26px; fill: #1b1a19; }
.town-xl { font-size: 29px; font-weight: 500; fill: #131211; }
.to-end { text-anchor: end; }
.to-start { text-anchor: start; }
.devtext { font: 28px "Liberation Sans", sans-serif; fill: #b2b0ac; }
.google { font: bold 37px Lato, sans-serif; stroke: #c4c3c0; stroke-width: 5; paint-order: stroke; }
.map-controls {
  position: absolute;
  top: 18px;
  right: 18px;
  bottom: 44px;
  display: flex;
  flex-direction: column;
  justify-content: space-between;
}
.map-btn { display: grid; place-items: center; width: 74px; height: 74px; background: #fff; border-radius: 4px; }
.map-btn svg { width: 34px; height: 34px; }
.map-zoom { display: flex; flex-direction: column; background: #fff; border-radius: 4px; box-shadow: 0 2px 7px rgba(0, 0, 0, .3); }
.map-zoom::before { content: ""; order: 1; height: 2px; margin: 0 9px -2px; background: #e6e6e6; z-index: 1; }
.map-zoom .map-btn:last-child { order: 2; }
.map-legal { position: absolute; right: 0; bottom: 0; display: flex; gap: 2px; font-size: 18px; line-height: 26px; color: #444; }
.map-legal > * { padding: 0 11px; background: #c3c2bf; }

/* Footer actions */
.section-upload .section-title { margin-bottom: 114px; }
.upload { display: block; height: 60px; padding: 0 17px; border: 2px solid #f0efef; margin-bottom: 12px; background: #fff; }
.section-submit { padding: 52px 51px; }
.submit { display: block; height: 91px; padding: 0 34px; border-radius: 7px; background: var(--coral); color: #fff; font-size: 27px; font-weight: 500; }
```
